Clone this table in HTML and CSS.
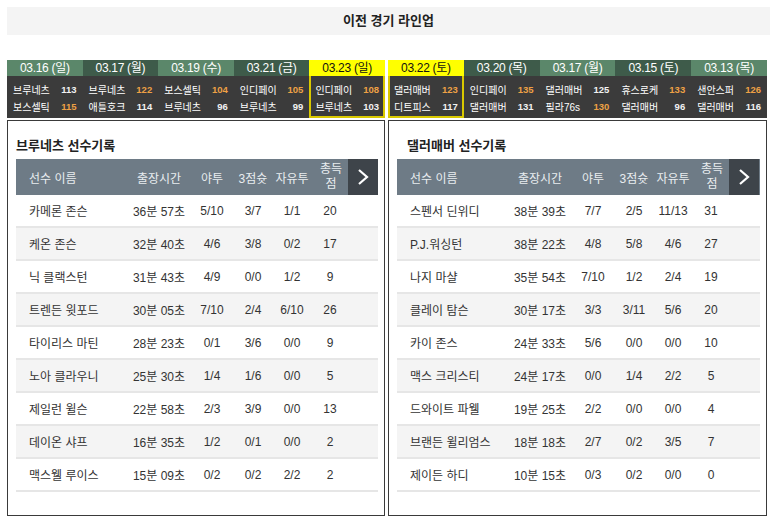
FILE: index.html
```html
<!DOCTYPE html>
<html lang="ko">
<head>
<meta charset="utf-8">
<title>이전 경기 라인업</title>
<link rel="stylesheet" href="styles.css">
</head>
<body>
<div class="page">
  <h1 class="title">이전 경기 라인업</h1>
  <div class="columns">
    <section class="side">
      <div class="strip">
        <div class="game light">
          <div class="date">03.16 (일)</div>
          <div class="scores">
            <div class="line"><span>브루네츠</span><b>113</b></div>
            <div class="line"><span>보스셀틱</span><b class="win">115</b></div>
          </div>
        </div>
        <div class="game dark">
          <div class="date">03.17 (월)</div>
          <div class="scores">
            <div class="line"><span>브루네츠</span><b class="win">122</b></div>
            <div class="line"><span>애틀호크</span><b>114</b></div>
          </div>
        </div>
        <div class="game light">
          <div class="date">03.19 (수)</div>
          <div class="scores">
            <div class="line"><span>보스셀틱</span><b class="win">104</b></div>
            <div class="line"><span>브루네츠</span><b>96</b></div>
          </div>
        </div>
        <div class="game dark">
          <div class="date">03.21 (금)</div>
          <div class="scores">
            <div class="line"><span>인디페이</span><b class="win">105</b></div>
            <div class="line"><span>브루네츠</span><b>99</b></div>
          </div>
        </div>
        <div class="game selected">
          <div class="date">03.23 (일)</div>
          <div class="scores">
            <div class="line"><span>인디페이</span><b class="win">108</b></div>
            <div class="line"><span>브루네츠</span><b>103</b></div>
          </div>
        </div>
      </div>
      <div class="panel">
        <h2 class="panel-title">브루네츠 선수기록</h2>
        <div class="table">
          <div class="thead">
            <div class="c name">선수 이름</div>
            <div class="c">출장시간</div>
            <div class="c">야투</div>
            <div class="c">3점슛</div>
            <div class="c">자유투</div>
            <div class="c two">총득<br>점</div>
            <div class="more"><svg width="12" height="18" viewBox="0 0 12 18"><polyline points="2,2 10,9 2,16" fill="none" stroke="#ffffff" stroke-width="2.2"/></svg></div>
          </div>
          <div class="row"><div class="c name">카메론 존슨</div><div class="c">36분 57초</div><div class="c">5/10</div><div class="c">3/7</div><div class="c">1/1</div><div class="c">20</div></div>
          <div class="row alt"><div class="c name">케온 존슨</div><div class="c">32분 40초</div><div class="c">4/6</div><div class="c">3/8</div><div class="c">0/2</div><div class="c">17</div></div>
          <div class="row"><div class="c name">닉 클랙스턴</div><div class="c">31분 43초</div><div class="c">4/9</div><div class="c">0/0</div><div class="c">1/2</div><div class="c">9</div></div>
          <div class="row alt"><div class="c name">트렌든 윗포드</div><div class="c">30분 05초</div><div class="c">7/10</div><div class="c">2/4</div><div class="c">6/10</div><div class="c">26</div></div>
          <div class="row"><div class="c name">타이리스 마틴</div><div class="c">28분 23초</div><div class="c">0/1</div><div class="c">3/6</div><div class="c">0/0</div><div class="c">9</div></div>
          <div class="row alt"><div class="c name">노아 클라우니</div><div class="c">25분 30초</div><div class="c">1/4</div><div class="c">1/6</div><div class="c">0/0</div><div class="c">5</div></div>
          <div class="row"><div class="c name">제일런 윌슨</div><div class="c">22분 58초</div><div class="c">2/3</div><div class="c">3/9</div><div class="c">0/0</div><div class="c">13</div></div>
          <div class="row alt"><div class="c name">데이온 샤프</div><div class="c">16분 35초</div><div class="c">1/2</div><div class="c">0/1</div><div class="c">0/0</div><div class="c">2</div></div>
          <div class="row"><div class="c name">맥스웰 루이스</div><div class="c">15분 09초</div><div class="c">0/2</div><div class="c">0/2</div><div class="c">2/2</div><div class="c">2</div></div>
        </div>
      </div>
    </section>

    <section class="side">
      <div class="strip">
        <div class="game selected">
          <div class="date">03.22 (토)</div>
          <div class="scores">
            <div class="line"><span>댈러매버</span><b class="win">123</b></div>
            <div class="line"><span>디트피스</span><b>117</b></div>
          </div>
        </div>
        <div class="game dark">
          <div class="date">03.20 (목)</div>
          <div class="scores">
            <div class="line"><span>인디페이</span><b class="win">135</b></div>
            <div class="line"><span>댈러매버</span><b>131</b></div>
          </div>
        </div>
        <div class="game light">
          <div class="date">03.17 (월)</div>
          <div class="scores">
            <div class="line"><span>댈러매버</span><b>125</b></div>
            <div class="line"><span>필라76s</span><b class="win">130</b></div>
          </div>
        </div>
        <div class="game dark">
          <div class="date">03.15 (토)</div>
          <div class="scores">
            <div class="line"><span>휴스로케</span><b class="win">133</b></div>
            <div class="line"><span>댈러매버</span><b>96</b></div>
          </div>
        </div>
        <div class="game light">
          <div class="date">03.13 (목)</div>
          <div class="scores">
            <div class="line"><span>샌안스퍼</span><b class="win">126</b></div>
            <div class="line"><span>댈러매버</span><b>116</b></div>
          </div>
        </div>
      </div>
      <div class="panel">
        <h2 class="panel-title indent">댈러매버 선수기록</h2>
        <div class="table">
          <div class="thead">
            <div class="c name">선수 이름</div>
            <div class="c">출장시간</div>
            <div class="c">야투</div>
            <div class="c">3점슛</div>
            <div class="c">자유투</div>
            <div class="c two">총득<br>점</div>
            <div class="more"><svg width="12" height="18" viewBox="0 0 12 18"><polyline points="2,2 10,9 2,16" fill="none" stroke="#ffffff" stroke-width="2.2"/></svg></div>
          </div>
          <div class="row"><div class="c name">스펜서 딘위디</div><div class="c">38분 39초</div><div class="c">7/7</div><div class="c">2/5</div><div class="c">11/13</div><div class="c">31</div></div>
          <div class="row alt"><div class="c name">P.J.워싱턴</div><div class="c">38분 22초</div><div class="c">4/8</div><div class="c">5/8</div><div class="c">4/6</div><div class="c">27</div></div>
          <div class="row"><div class="c name">나지 마샬</div><div class="c">35분 54초</div><div class="c">7/10</div><div class="c">1/2</div><div class="c">2/4</div><div class="c">19</div></div>
          <div class="row alt"><div class="c name">클레이 탐슨</div><div class="c">30분 17초</div><div class="c">3/3</div><div class="c">3/11</div><div class="c">5/6</div><div class="c">20</div></div>
          <div class="row"><div class="c name">카이 존스</div><div class="c">24분 33초</div><div class="c">5/6</div><div class="c">0/0</div><div class="c">0/0</div><div class="c">10</div></div>
          <div class="row alt"><div class="c name">맥스 크리스티</div><div class="c">24분 17초</div><div class="c">0/0</div><div class="c">1/4</div><div class="c">2/2</div><div class="c">5</div></div>
          <div class="row"><div class="c name">드와이트 파웰</div><div class="c">19분 25초</div><div class="c">2/2</div><div class="c">0/0</div><div class="c">0/0</div><div class="c">4</div></div>
          <div class="row alt"><div class="c name">브랜든 윌리엄스</div><div class="c">18분 18초</div><div class="c">2/7</div><div class="c">0/2</div><div class="c">3/5</div><div class="c">7</div></div>
          <div class="row"><div class="c name">제이든 하디</div><div class="c">10분 15초</div><div class="c">0/3</div><div class="c">0/2</div><div class="c">0/0</div><div class="c">0</div></div>
        </div>
      </div>
    </section>
  </div>
</div>
</body>
</html>
```

FILE: styles.css
```css
* { box-sizing: border-box; }
body {
  margin: 0;
  background: #ffffff;
  font-family: "Liberation Sans", "Noto Sans CJK KR", sans-serif;
  color: #333333;
}
.page {
  padding: 7px 3px 0 7px;
}
.title {
  margin: 0 0 25px 0;
  height: 28px;
  line-height: 28px;
  background: #f4f4f4;
  text-align: center;
  font-size: 13px;
  font-weight: bold;
  color: #222222;
}
.columns {
  display: grid;
  grid-template-columns: 378px 379px;
  column-gap: 3px;
}
.strip {
  display: grid;
  grid-template-columns: repeat(5, 1fr);
}
.game .date {
  height: 16px;
  line-height: 16px;
  text-align: center;
  color: #ffffff;
  font-size: 12px;
  letter-spacing: -0.3px;
}
.game.light .date { background: #5b876a; }
.game.dark .date { background: #3e5b4a; }
.game.selected .date { background: #ffff00; color: #111111; }
.scores {
  height: 42px;
  background: #3b3b3b;
  padding: 5px 6px 0 6px;
}
.game.selected .scores {
  border: 2px solid #d9c800;
  border-top: none;
  padding: 5px 4px 0 4px;
}
.line {
  display: flex;
  justify-content: space-between;
  align-items: center;
  height: 17px;
  color: #ffffff;
  font-size: 10px;
}
.line b {
  font-weight: bold;
  font-size: 9.5px;
  color: #f2f2f2;
}
.line b.win { color: #eea145; }
.panel {
  margin-top: 2px;
  border: 1px solid #3a3a3a;
  padding: 16px 6px 23px 8px;
}
.panel-title {
  margin: 0 0 4px 0;
  height: 18px;
  line-height: 18px;
  font-size: 13px;
  font-weight: bold;
  color: #222222;
}
.panel-title.indent { padding-left: 10px; }
.thead, .row {
  display: grid;
  grid-template-columns: 112px 62px 44px 38px 40px 36px 30px;
  align-items: center;
}
.thead {
  height: 36px;
  background: #6e7b86;
  color: #e9edf0;
  font-size: 12px;
}
.row {
  height: 33px;
  border-bottom: 2px solid #e6e6e6;
  font-size: 12px;
  color: #333333;
}
.row.alt { background: #f4f4f4; }
.c {
  text-align: center;
  white-space: nowrap;
}
.c.name {
  text-align: left;
  padding-left: 13px;
}
.c.two {
  line-height: 15px;
  padding-left: 2px;
}
.more {
  height: 36px;
  background: #3e444a;
  display: flex;
  align-items: center;
  justify-content: center;
}
.more svg { display: block; }
```
